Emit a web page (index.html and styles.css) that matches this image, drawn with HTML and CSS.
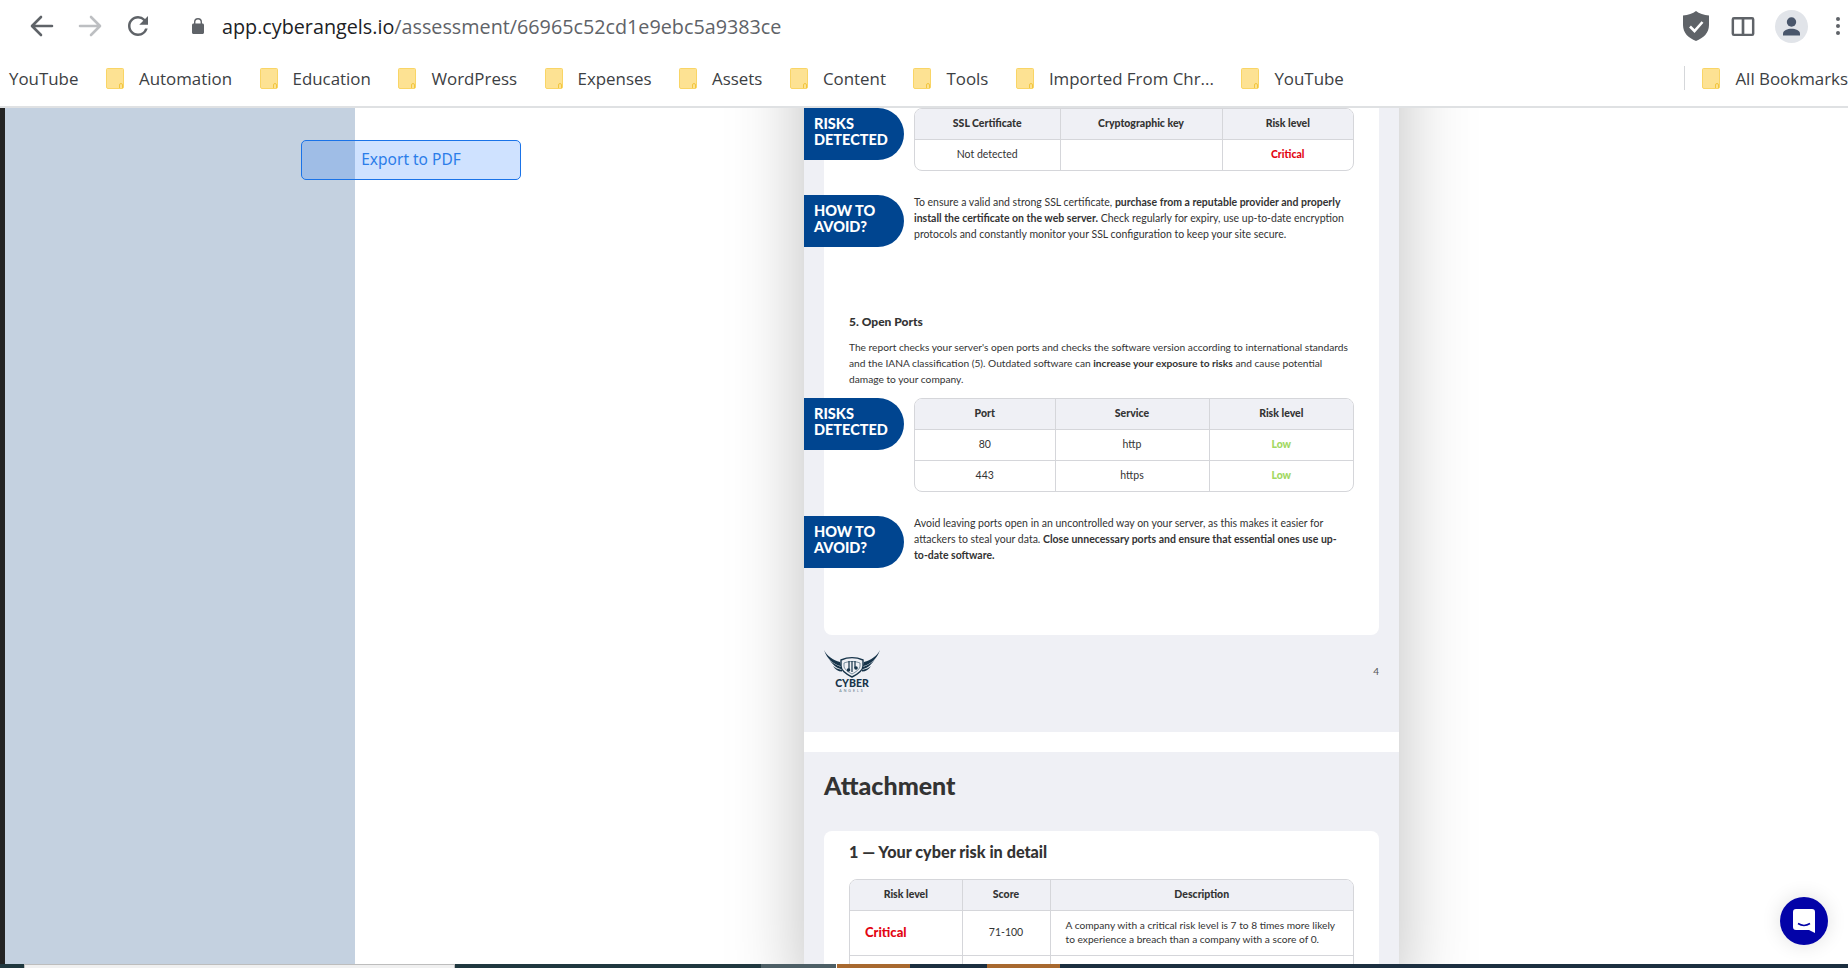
FILE: index.html
```html
<!DOCTYPE html>
<html>
    <head>
        <meta charset="UTF-8">
        <title>Cyber Angels assessment</title>
        <link rel="stylesheet" href="styles.css">
    </head>
    <body>
        <svg class="defs" width="0" height="0">
            <symbol id="folder" viewBox="0 0 18 21">
                <path d="M1.500 .5h15a1 1 0 0 1 1 1V19a1.500 1.500 0 0 1-1.500 1.500H2A1.500 1.500 0 0 1 .5 19V1.500a1 1 0 0 1 1-1z" fill="#fde293" stroke="#f9d566"/>
                <path d="M13.500 20v-3a1.500 1.500 0 0 1 3 0v3" fill="none" stroke="#f2c63f"/>
            </symbol>
        </svg>

        <div class="app">
            <header class="browser">
                <div class="toolbar">
                    <svg class="nav-icon" viewBox="0 0 30 30"><path d="M25 15H6M14 6l-9 9 9 9" fill="none" stroke="#5f6368" stroke-width="2.600" stroke-linecap="round" stroke-linejoin="round"/></svg>
                    <svg class="nav-icon" viewBox="0 0 30 30"><path d="M5 15h19M16 6l9 9-9 9" fill="none" stroke="#bdbfc2" stroke-width="2.600" stroke-linecap="round" stroke-linejoin="round"/></svg>
                    <svg class="nav-icon reload" viewBox="0 0 24 24"><path d="M17.650 6.350A7.958 7.958 0 0 0 12 4c-4.420 0-7.990 3.580-7.990 8s3.570 8 7.990 8c3.730 0 6.840-2.550 7.730-6h-2.080A5.990 5.990 0 0 1 12 18c-3.310 0-6-2.690-6-6s2.690-6 6-6c1.660 0 3.140.69 4.220 1.780L13 11h7V4l-2.350 2.350z"/></svg>
                    <svg class="lock" viewBox="0 0 12 16"><path d="M10.500 5.500H10V4a4 4 0 0 0-8 0v1.500h-.5C.7 5.500 0 6.200 0 7v7.500C0 15.300.7 16 1.500 16h9c.8 0 1.500-.7 1.500-1.500V7c0-.8-.7-1.500-1.500-1.500zM3.400 5.500V4a2.600 2.600 0 0 1 5.200 0v1.500z"/></svg>
                    <div class="url"><span class="host">app.cyberangels.io</span>/assessment/66965c52cd1e9ebc5a9383ce</div>
                    <svg class="shield" viewBox="0 0 26 30"><path d="M13 0c3 2.500 8 4 13 4.500V14c0 8-5.500 13-13 16C5.500 27 0 22 0 14V4.500C5 4 10 2.500 13 0z" fill="#5f6368"/><path d="M7 15.500l4.500 4.500L19.500 11" fill="none" stroke="#fff" stroke-width="2.600"/></svg>
                    <svg class="split" viewBox="0 0 24 20"><path d="M2.500 0h19A2.500 2.500 0 0 1 24 2.500v15a2.500 2.500 0 0 1-2.500 2.500h-19A2.500 2.500 0 0 1 0 17.500v-15A2.500 2.500 0 0 1 2.500 0zm.1 2.500v15h8v-15zm10.800 0v15h8v-15z" fill="#5f6368" fill-rule="evenodd"/></svg>
                    <svg class="avatar" viewBox="0 0 33 33"><circle cx="16.500" cy="16.500" r="16.500" fill="#e1e4e9"/><circle cx="16.500" cy="12" r="4.700" fill="#49566b"/><path d="M8 25.500v-2c0-3 4.500-4.800 8.500-4.800s8.500 1.800 8.500 4.800v2z" fill="#49566b"/></svg>
                    <div class="dots"><i></i><i></i><i></i></div>
                </div>
                <nav class="bookmarks">
                    <a class="mark">YouTube</a>
                    <a class="mark"><svg class="folder"><use href="#folder"/></svg>Automation</a>
                    <a class="mark"><svg class="folder"><use href="#folder"/></svg>Education</a>
                    <a class="mark"><svg class="folder"><use href="#folder"/></svg>WordPress</a>
                    <a class="mark"><svg class="folder"><use href="#folder"/></svg>Expenses</a>
                    <a class="mark"><svg class="folder"><use href="#folder"/></svg>Assets</a>
                    <a class="mark"><svg class="folder"><use href="#folder"/></svg>Content</a>
                    <a class="mark"><svg class="folder"><use href="#folder"/></svg>Tools</a>
                    <a class="mark"><svg class="folder"><use href="#folder"/></svg>Imported From Chr...</a>
                    <a class="mark"><svg class="folder"><use href="#folder"/></svg>YouTube</a>
                    <a class="mark all"><svg class="folder"><use href="#folder"/></svg>All Bookmarks</a>
                </nav>
            </header>

            <main class="main">
                <div class="rail"></div>
                <aside class="sidebar"></aside>
                <button class="export">Export to PDF</button>
                <div class="viewer">
                    <div class="doc">
                        <section class="page first-page">
                            <div class="card first">
                                <div class="row">
                                    <div class="pill">RISKS DETECTED</div>
                                    <div class="table-wrap">
                                        <table class="ssl">
                                            <tr><th>SSL Certificate</th><th>Cryptographic key</th><th>Risk level</th></tr>
                                            <tr><td>Not detected</td><td></td><td class="critical">Critical</td></tr>
                                        </table>
                                    </div>
                                </div>
                                <div class="row">
                                    <div class="pill">HOW TO AVOID?</div>
                                    <p class="advice">To ensure a valid and strong SSL certificate, <b>purchase from a reputable provider and properly install the certificate on the web server.</b> Check regularly for expiry, use up-to-date encryption protocols and constantly monitor your SSL configuration to keep your site secure.</p>
                                </div>
                                <h4 class="section-title">5. Open Ports</h4>
                                <p class="intro">The report checks your server's open ports and checks the software version according to international standards and the IANA classification (5). Outdated software can <b>increase your exposure to risks</b> and cause potential damage to your company.</p>
                                <div class="row tight">
                                    <div class="pill">RISKS DETECTED</div>
                                    <div class="table-wrap">
                                        <table class="ports">
                                            <tr><th>Port</th><th>Service</th><th>Risk level</th></tr>
                                            <tr><td>80</td><td>http</td><td class="low">Low</td></tr>
                                            <tr><td>443</td><td>https</td><td class="low">Low</td></tr>
                                        </table>
                                    </div>
                                </div>
                                <div class="row">
                                    <div class="pill">HOW TO AVOID?</div>
                                    <p class="advice">Avoid leaving ports open in an uncontrolled way on your server, as this makes it easier for attackers to steal your data. <b>Close unnecessary ports and ensure that essential ones use up-to-date software.</b></p>
                                </div>
                            </div>
                            <footer class="page-foot">
                                <svg class="logo" viewBox="0 0 56 42">
                                    <path d="M0 0c3 6 9 10 16 12l1 4C10 15 3 9 0 0zM56 0c-3 6-9 10-16 12l-1 4c7-1 14-7 17-16z" fill="#17344a"/>
                                    <path d="M5 9c3 4 7 6 12 8v2C12 18 8 14 5 9zM51 9c-3 4-7 6-12 8v2c5-1 9-5 12-10zM9 16c2 2 5 3 9 4v1.500c-4 0-7-2-9-5.500zM47 16c-2 2-5 3-9 4v1.500c4 0 7-2 9-5.500z" fill="#17344a"/>
                                    <path d="M17 10c7-3 15-3 22 0v6c0 4-5 8-11 11-6-3-11-7-11-11z" fill="none" stroke="#17344a" stroke-width="1.400"/>
                                    <path d="M20 13c5-2 11-2 16 0v3c0 3-4 6-8 8-4-2-8-5-8-8z" fill="none" stroke="#5b7385" stroke-width=".8"/>
                                    <path d="M25 11v8M31 11v7M28 11v11" fill="none" stroke="#17344a" stroke-width="1.200"/>
                                    <circle cx="24.500" cy="20" r="1.800" fill="#17344a"/><circle cx="32" cy="18" r="1.800" fill="#17344a"/>
                                    <text class="logo-name" x="28" y="36.500" text-anchor="middle">CYBER</text>
                                    <text class="logo-sub" x="28" y="41.500" text-anchor="middle">ANGELS</text>
                                </svg>
                                <span class="page-no">4</span>
                            </footer>
                        </section>

                        <section class="page second">
                            <h2 class="attach">Attachment</h2>
                            <div class="card">
                                <h3 class="risk-title">1 — Your cyber risk in detail</h3>
                                <div class="table-wrap">
                                    <table class="detail">
                                        <tr><th>Risk level</th><th>Score</th><th>Description</th></tr>
                                        <tr><td class="critical big">Critical</td><td>71-100</td><td class="desc">A company with a critical risk level is 7 to 8 times more likely to experience a breach than a company with a score of 0.</td></tr>
                                        <tr><td></td><td></td><td></td></tr>
                                    </table>
                                </div>
                            </div>
                        </section>
                    </div>
                </div>
                <button class="chat">
                    <svg viewBox="0 0 22 24" width="22" height="24"><path d="M3 0h16a3 3 0 0 1 3 3v21l-6-3H3a3 3 0 0 1-3-3V3a3 3 0 0 1 3-3z" fill="#fff"/><path d="M5 14.500c3.500 2.200 8.500 2.200 12 0" fill="none" stroke="#0303a8" stroke-width="1.500"/></svg>
                </button>
            </main>

            <div class="taskbar">
                <span class="task dark first-task"></span>
                <span class="task window"></span>
                <span class="task dark mid"></span>
                <span class="task grey"></span>
                <span class="task orange"></span>
                <span class="task navy short"></span>
                <span class="task orange"></span>
                <span class="task navy rest"></span>
            </div>
        </div>
    </body>
</html>
```

FILE: styles.css
```css
* {
    box-sizing: border-box;
}
html, body {
    margin: 0;
    height: 100%;
    overflow: hidden;
}
body {
    font-family: "Lato", "Liberation Sans", sans-serif;
    color: #333;
}
.defs {
    position: absolute;
}
.app {
    display: flex;
    flex-direction: column;
    height: 968px;
}

/* browser chrome */
.browser {
    position: relative;
    z-index: 1;
    height: 108px;
    background-color: white;
    border-bottom: 2px solid #dfe1e3;
    font-family: "Open Sans", sans-serif;
    flex: none;
}
.toolbar {
    display: flex;
    align-items: center;
    height: 52px;
    padding-left: 27px;
}
.nav-icon {
    width: 30px;
    height: 30px;
    margin-right: 18px;
    flex: none;
}
.nav-icon.reload {
    fill: #5f6368;
}
.lock {
    width: 12px;
    height: 16px;
    fill: #5f6368;
    margin: 0 18px 0 21px;
    flex: none;
}
.url {
    font-size: 19.75px;
    color: #5f6368;
    white-space: nowrap;
    flex: 1;
}
.host {
    color: #202124;
}
.shield {
    width: 26px;
    height: 30px;
    margin-right: 22px;
}
.split {
    width: 24px;
    height: 19px;
    margin-right: 20px;
}
.avatar {
    width: 33px;
    height: 33px;
    margin-right: 28px;
}
.dots {
    display: flex;
    flex-direction: column;
    gap: 3px;
    margin-right: 8px;
}
.dots i {
    width: 4px;
    height: 4px;
    border-radius: 50%;
    background-color: #5f6368;
}
.bookmarks {
    display: flex;
    align-items: center;
    height: 54px;
    padding: 0 0 2px 9px;
    gap: 27.5px;
    font-size: 16.9px;
    color: #3c4043;
    white-space: nowrap;
    overflow: hidden;
}
.mark {
    display: flex;
    align-items: center;
    gap: 15px;
}
.mark.all {
    margin-left: auto;
    border-left: 1px solid #d5d7da;
    padding-left: 17px;
    height: 24px;
}
.folder {
    width: 18px;
    height: 21px;
    flex: none;
}

/* app area */
.main {
    position: relative;
    display: flex;
    height: 856px;
    flex: none;
    overflow: hidden;
}
.rail {
    width: 5px;
    background-color: #232323;
}
.sidebar {
    width: 350px;
    background-color: #c4d1e0;
}
.export {
    position: absolute;
    left: 301px;
    top: 32px;
    width: 220px;
    height: 40px;
    padding-bottom: 3px;
    background-color: rgba(13, 110, 253, 0.2);
    border: 1px solid #1a73e8;
    border-radius: 5px;
    color: #2b7de9;
    font-family: "Noto Sans", sans-serif;
    font-size: 15.5px;
}
.viewer {
    flex: 1;
    display: flex;
    justify-content: center;
    background-color: white;
}
/* the doc is scrolled: its first page starts above the visible area */
.doc {
    width: 595px;
    height: max-content;
    margin-top: -120px;
    box-shadow: 0 0 70px rgba(0, 0, 0, 0.26);
    background-color: white;
}
.page {
    background-color: #eff0f5;
    padding: 0 20px;
}
.first-page {
    padding-top: 120px;
}
.page.second {
    margin-top: 20px;
    padding-top: 18px;
}
.card {
    background-color: white;
    border-radius: 8px;
    padding: 13px 25px 0;
}
.card.first {
    padding-top: 0;
    padding-bottom: 67px;
    border-radius: 0 0 8px 8px;
}

/* risk rows */
.row {
    display: flex;
    gap: 10px;
    margin: 24px 0 0 -45px;
}
.row:first-child {
    margin-top: 0;
}
.row.tight {
    margin-top: 11px;
}
.pill {
    width: 100px;
    height: 52px;
    padding: 8px 10px 0;
    flex: none;
    background-color: #004590;
    border-radius: 0 26px 26px 0;
    color: white;
    font-size: 14.5px;
    font-weight: 900;
    line-height: 16px;
}
.advice {
    margin: -1px 0 0;
    padding-right: 5px;
    flex: 1;
    font-size: 10.5px;
    line-height: 16px;
}
.section-title {
    margin: 67px 0 9px;
    font-size: 12px;
    line-height: 16px;
    font-weight: 900;
}
.intro {
    margin: 0;
    font-size: 10.2px;
    line-height: 16px;
}

/* tables */
.table-wrap {
    flex: 1;
    border: 1.5px solid #d5d6da;
    border-radius: 8px;
    overflow: hidden;
}
table {
    width: 100%;
    table-layout: fixed;
    border-collapse: collapse;
    font-size: 10.5px;
}
th {
    height: 30px;
    padding: 0 0 2px;
    background-color: #eff0f5;
    border-bottom: 1.5px solid #d5d6da;
    border-left: 1.5px solid #d5d6da;
    font-weight: 900;
}
td {
    height: 31px;
    padding: 0 0 2px;
    text-align: center;
    border-top: 1.5px solid #d5d6da;
    border-left: 1.5px solid #d5d6da;
}
th:first-child, td:first-child {
    border-left: none;
}
.ssl th:first-child {
    width: 145px;
}
.ssl th:nth-child(2) {
    width: 162px;
}
.ports th:first-child {
    width: 140px;
}
.ports th:nth-child(2) {
    width: 154px;
}
.detail th:first-child {
    width: 112px;
}
.detail th:nth-child(2) {
    width: 88px;
}
.detail td {
    height: 45px;
}
td.desc {
    padding: 0 12px 2px 15px;
    text-align: left;
    font-size: 10.2px;
    line-height: 14px;
}
.critical {
    color: #e30613;
    font-weight: 900;
}
.critical.big {
    padding-left: 15px;
    text-align: left;
    font-size: 13px;
}
.low {
    color: #a2d861;
    font-weight: 900;
}

/* page footer */
.page-foot {
    display: flex;
    justify-content: space-between;
    align-items: flex-start;
    height: 97px;
    padding-top: 15px;
}
.logo {
    width: 56px;
    height: 42px;
}
.logo-name {
    font-size: 10.5px;
    font-weight: 900;
    fill: #17344a;
    font-family: "Lato", sans-serif;
}
.logo-sub {
    font-size: 3.5px;
    letter-spacing: 2px;
    fill: #5b7385;
    font-family: "Lato", sans-serif;
}
.page-no {
    margin-top: 15px;
    font-size: 10px;
    color: #555;
}
.attach {
    margin: 0 0 31px;
    font-size: 25px;
    line-height: 30px;
    font-weight: 900;
}
.risk-title {
    margin: 0 0 19px;
    font-size: 16.2px;
    line-height: 16px;
    font-weight: 900;
}

/* chat bubble */
.chat {
    position: absolute;
    right: 20px;
    bottom: 19px;
    width: 48px;
    height: 48px;
    display: flex;
    align-items: center;
    justify-content: center;
    padding: 0;
    border: none;
    border-radius: 50%;
    background-color: #0303a8;
    box-shadow: 0 0 20px rgba(0, 0, 0, 0.12);
}

/* taskbar sliver at the bottom of the shot */
.taskbar {
    display: flex;
    height: 4px;
    flex: none;
}
.task.dark {
    background-color: #20383f;
}
.first-task {
    width: 24px;
}
.window {
    width: 431px;
    background-color: #f0f0f0;
    border: 1px solid #bdbdbd;
    border-bottom: none;
}
.mid {
    width: 306px;
}
.grey {
    width: 75px;
    margin-right: 1px;
    background-color: #4d5f66;
}
.orange {
    width: 73px;
    background-color: #a8692f;
}
.navy {
    background-color: #1c2f40;
}
.short {
    width: 77px;
}
.rest {
    flex: 1;
}
```
